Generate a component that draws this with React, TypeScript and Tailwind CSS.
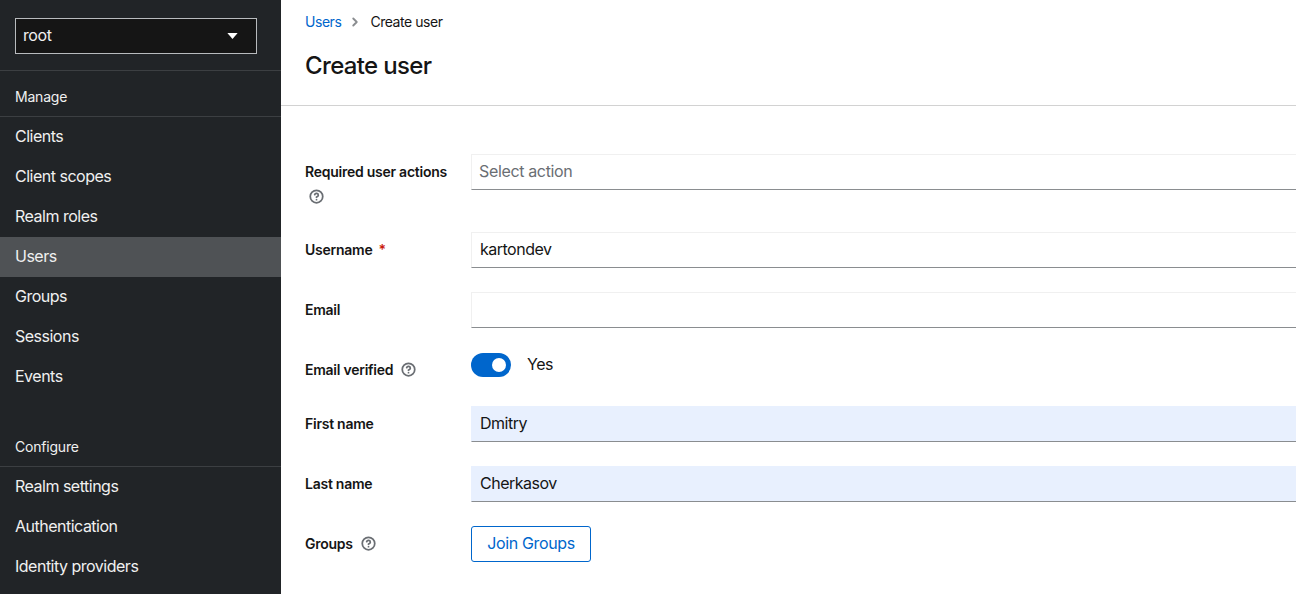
import { CircleHelp, ChevronRight } from "lucide-react";

const manageItems = ["Clients", "Client scopes", "Realm roles", "Users", "Groups", "Sessions", "Events"];
const configureItems = ["Realm settings", "Authentication", "Identity providers"];

function NavItem({ label }: { label: string }) {
  const active = label === "Users";
  return (
    <div className={`flex h-10 items-center px-[15px] pb-[2px] text-[16px] tracking-[-0.5px] text-[#f0f0f0] ${active ? "bg-[#4f5255]" : ""}`}>
      {label}
    </div>
  );
}

function Help() {
  return <CircleHelp className="h-[15px] w-[15px] shrink-0 text-[#6a6e73]" strokeWidth={2.8} />;
}

function Field({ value, filled, placeholder }: { value?: string; filled?: boolean; placeholder?: string }) {
  return (
    <div
      className={`-mr-2 flex h-9 flex-1 items-center border pb-[2px] text-[16px] ${
        filled ? "border-[#e8f0fe] border-b-[#8a8d90] bg-[#e8f0fe]" : "border-[#f0f0f0] border-b-[#8a8d90] bg-white"
      } ${placeholder ? "pl-[7px] tracking-[-0.35px] text-[#6a6e73]" : "pl-2 tracking-[-0.5px] text-[#151515]"}`}
    >
      {value ?? placeholder}
    </div>
  );
}

function Label({ children }: { children: React.ReactNode }) {
  return (
    <div className="flex h-9 w-[166px] shrink-0 items-center gap-2 pb-px text-[14px] font-semibold tracking-[-0.25px] text-[#151515]">
      {children}
    </div>
  );
}

export default function App() {
  return (
    <div className="flex h-[594px] w-[1296px] overflow-hidden bg-white font-['Inter',sans-serif]">
      <aside className="w-[281px] shrink-0 bg-[#212427]">
        <div className="border-b border-[#3c3f42] px-[15px] pb-4 pt-[18px]">
          <div className="flex h-[36px] w-[242px] items-center justify-between border border-[#b8bbbe] bg-[#151515] pb-[2px] pl-[7px] pr-[18px] text-[16px] tracking-[-0.4px] text-[#f0f0f0]">
            root
            <svg viewBox="0 0 12 7" className="mt-[2px] h-[6px] w-[11px]" fill="#fff">
              <path d="M0 0h12L6 7z" />
            </svg>
          </div>
        </div>
        <div className="flex h-[46px] items-center border-b border-[#3c3f42] px-[15px] pb-[2px] pt-2 text-[14px] tracking-[-0.2px] text-[#f0f0f0]">
          Manage
        </div>
        {manageItems.map((item) => (
          <NavItem key={item} label={item} />
        ))}
        <div className="mt-[30px] flex h-[40px] items-center border-b border-[#3c3f42] px-[15px] text-[14px] tracking-[-0.2px] text-[#f0f0f0]">
          Configure
        </div>
        {configureItems.map((item) => (
          <NavItem key={item} label={item} />
        ))}
      </aside>

      <main className="min-w-0 flex-1 overflow-hidden">
        <div className="h-[106px] border-b border-[#d2d2d2] pl-6">
          <div className="flex items-center pt-[13px] text-[14px] leading-[18px] tracking-[-0.45px] text-[#151515]">
            <span className="text-[#0066cc]">Users</span>
            <ChevronRight className="ml-[7px] mr-2 h-[14px] w-[14px] text-[#8a8d90]" strokeWidth={3.2} />
            <span>Create user</span>
          </div>
          <h1 className="mt-[17px] text-[24px] font-medium leading-[36px] tracking-[-0.65px] text-[#151515]">Create user</h1>
        </div>

        <div className="flex flex-col gap-6 pl-6 pt-12">
          <div className="flex h-[54px]">
            <div className="w-[166px] shrink-0 pt-2 text-[14px] font-semibold leading-5 tracking-[-0.25px] text-[#151515]">
              Required user actions
              <div className="mt-[7px] pl-[4px]">
                <Help />
              </div>
            </div>
            <Field placeholder="Select action" />
          </div>
          <div className="flex">
            <Label>
              Username <span className="-ml-[2px] text-[#c9190b]">*</span>
            </Label>
            <Field value="kartondev" />
          </div>
          <div className="flex">
            <Label>Email</Label>
            <Field value="" />
          </div>
          <div className="flex h-[30px]">
            <Label>
              Email verified <Help />
            </Label>
            <div className="flex h-6 items-center gap-4 pt-px text-[16px] tracking-[-0.5px] text-[#151515]">
              <div className="flex h-6 w-10 items-center justify-end rounded-full bg-[#0066cc] pr-[5px]">
                <div className="h-[14px] w-[14px] rounded-full bg-white" />
              </div>
              <span className="-translate-y-px">Yes</span>
            </div>
          </div>
          <div className="flex">
            <Label>First name</Label>
            <Field value="Dmitry" filled />
          </div>
          <div className="flex">
            <Label>Last name</Label>
            <Field value="Cherkasov" filled />
          </div>
          <div className="flex">
            <Label>
              Groups <Help />
            </Label>
            <button className="h-9 w-[120px] rounded-[3px] border border-[#0066cc] bg-white pb-[2px] text-[16px] tracking-[-0.35px] text-[#0066cc]">
              Join Groups
            </button>
          </div>
        </div>
      </main>
    </div>
  );
}
